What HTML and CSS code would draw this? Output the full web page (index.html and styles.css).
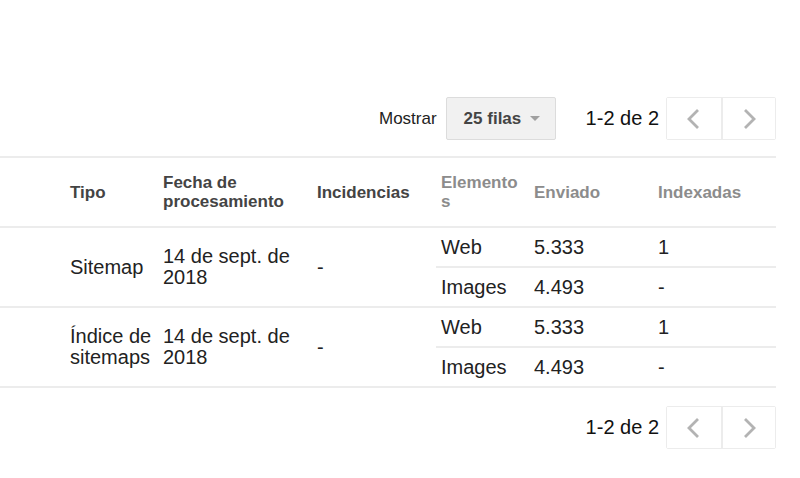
FILE: index.html
```html
<!DOCTYPE html>
<html lang="es">
<head>
<meta charset="utf-8">
<title>Sitemaps</title>
<link rel="stylesheet" href="styles.css">
</head>
<body>
<div class="page">
  <div class="toolbar top">
    <span class="label">Mostrar</span>
    <button class="select">25 filas <span class="caret"></span></button>
    <span class="range">1-2 de 2</span>
    <div class="pager">
      <button class="pg"><svg width="20" height="24" viewBox="0 0 20 24"><polyline points="14,3 5,12 14,21" fill="none" stroke="#b3b3b3" stroke-width="2.8"/></svg></button>
      <button class="pg"><svg width="20" height="24" viewBox="0 0 20 24"><polyline points="6,3 15,12 6,21" fill="none" stroke="#b3b3b3" stroke-width="2.8"/></svg></button>
    </div>
  </div>

  <div class="table">
    <div class="row head">
      <div class="cell"></div>
      <div class="cell">Tipo</div>
      <div class="cell">Fecha de procesamiento</div>
      <div class="cell">Incidencias</div>
      <div class="cell sub muted elem">Elementos</div>
      <div class="cell sub muted">Enviado</div>
      <div class="cell sub muted">Indexadas</div>
    </div>

    <div class="row body">
      <div class="cell"></div>
      <div class="cell">Sitemap</div>
      <div class="cell">14 de sept. de 2018</div>
      <div class="cell">-</div>
      <div class="subtable">
        <div class="subrow">
          <div class="cell sub">Web</div><div class="cell sub">5.333</div><div class="cell sub">1</div>
        </div>
        <div class="subrow">
          <div class="cell sub">Images</div><div class="cell sub">4.493</div><div class="cell sub">-</div>
        </div>
      </div>
    </div>

    <div class="row body">
      <div class="cell"></div>
      <div class="cell">Índice de sitemaps</div>
      <div class="cell">14 de sept. de 2018</div>
      <div class="cell">-</div>
      <div class="subtable">
        <div class="subrow">
          <div class="cell sub">Web</div><div class="cell sub">5.333</div><div class="cell sub">1</div>
        </div>
        <div class="subrow">
          <div class="cell sub">Images</div><div class="cell sub">4.493</div><div class="cell sub">-</div>
        </div>
      </div>
    </div>
  </div>

  <div class="toolbar bottom">
    <span class="range">1-2 de 2</span>
    <div class="pager">
      <button class="pg"><svg width="20" height="24" viewBox="0 0 20 24"><polyline points="14,3 5,12 14,21" fill="none" stroke="#b3b3b3" stroke-width="2.8"/></svg></button>
      <button class="pg"><svg width="20" height="24" viewBox="0 0 20 24"><polyline points="6,3 15,12 6,21" fill="none" stroke="#b3b3b3" stroke-width="2.8"/></svg></button>
    </div>
  </div>
</div>
</body>
</html>
```

FILE: styles.css
```css
* { box-sizing: border-box; }
html, body { margin: 0; padding: 0; background: #fff; }
body {
  font-family: "Liberation Sans", Arial, sans-serif;
  color: #222;
}
.page {
  width: 776px;
  padding-top: 97px;
}
.toolbar {
  display: flex;
  justify-content: flex-end;
  align-items: center;
}
.toolbar.bottom { margin-top: 18px; }
.label {
  font-size: 17px;
  color: #222;
  margin-right: 9px;
}
.select {
  display: flex;
  align-items: center;
  width: 110px;
  height: 43px;
  padding: 0 0 0 17px;
  background: #f1f1f1;
  border: 1px solid #dcdcdc;
  border-radius: 2px;
  font-family: inherit;
  font-size: 17px;
  font-weight: bold;
  color: #444;
  margin-right: 30px;
}
.caret {
  display: inline-block;
  width: 0; height: 0;
  margin-left: 9px;
  border-left: 5px solid transparent;
  border-right: 5px solid transparent;
  border-top: 5px solid #a0a0a0;
}
.range {
  font-size: 20px;
  color: #111;
  margin-right: 7px;
}
.pager {
  display: flex;
  height: 43px;
  border: 1px solid #ececec;
  border-radius: 2px;
  background: #fff;
}
.pg {
  width: 54px;
  height: 100%;
  border: 0;
  background: #fff;
  padding: 0;
  display: flex;
  align-items: center;
  justify-content: center;
}
.pg + .pg { border-left: 2px solid #ececec; }

.table {
  margin-top: 16px;
  border-top: 2px solid #ececec;
}
.row {
  display: grid;
  grid-template-columns: 70px 93px 154px 119px 340px;
  border-bottom: 2px solid #ececec;
}
.row.head {
  grid-template-columns: 70px 93px 154px 119px 93px 124px 123px;
  height: 70px;
  font-size: 17px;
  font-weight: bold;
  line-height: 19px;
  color: #444;
}
.row.body {
  height: 80px;
  font-size: 20px;
  line-height: 21px;
}
.cell {
  display: flex;
  align-items: center;
  padding-right: 6px;
}
.cell.sub { padding-left: 5px; }
.muted { color: #8c8c8c; }
.elem { padding-right: 9px; overflow-wrap: anywhere; }
.subtable {
  display: flex;
  flex-direction: column;
}
.subrow {
  flex: 1;
  display: grid;
  grid-template-columns: 93px 124px 123px;
}
.subrow + .subrow { border-top: 2px solid #ececec; }
```
